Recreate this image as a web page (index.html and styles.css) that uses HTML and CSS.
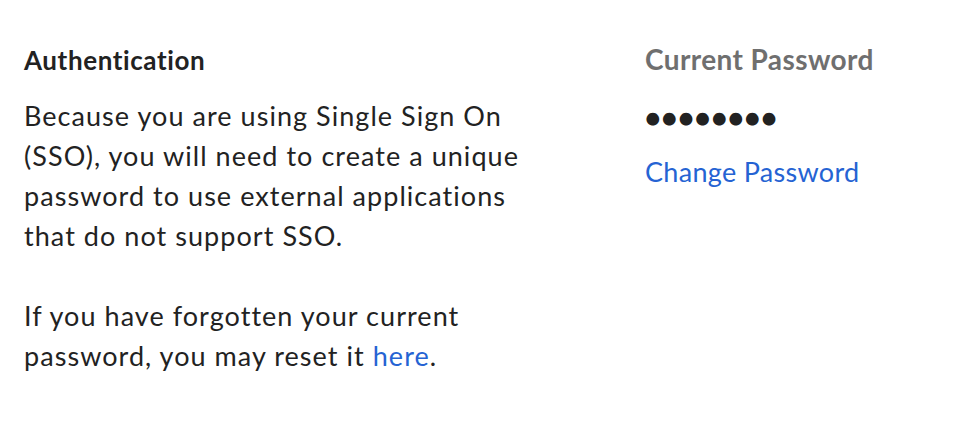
FILE: index.html
```html
<!DOCTYPE html>
<html>
<head>
<meta charset="utf-8">
<link rel="stylesheet" href="styles.css">
</head>
<body>
<div class="page">
  <section class="col-left">
    <h2 class="title">Authentication</h2>
    <p class="text">Because you are using Single Sign On (SSO), you will need to create a unique password to use external applications that do not support SSO.</p>
    <p class="text">If you have forgotten your current password, you may reset it <a class="link" href="#">here</a>.</p>
  </section>
  <section class="col-right">
    <h2 class="label">Current Password</h2>
    <div class="dots">●●●●●●●●</div>
    <a class="link change" href="#">Change Password</a>
  </section>
</div>
</body>
</html>
```

FILE: styles.css
```css
html, body {
  margin: 0;
  padding: 0;
  background: #ffffff;
}
body {
  font-family: Lato, "Open Sans", sans-serif;
  color: #222222;
}
.page {
  display: flex;
  padding: 42px 24px 0 24px;
}
.col-left {
  width: 526px;
}
.col-right {
  margin-left: 95px;
  display: flex;
  flex-direction: column;
  align-items: flex-start;
}
.title {
  margin: 0 0 18px 0;
  font-size: 26px;
  font-weight: 700;
  line-height: 36px;
  letter-spacing: 0.6px;
  color: #222222;
}
.text {
  margin: 0 0 40px 0;
  font-size: 27px;
  line-height: 40px;
  letter-spacing: 1.05px;
}
.label {
  margin: 0;
  font-size: 28px;
  line-height: 34px;
  font-weight: 700;
  letter-spacing: 0.4px;
  color: #6f6f6f;
}
.dots {
  margin-top: 21px;
  font-size: 26px;
  line-height: 40px;
  letter-spacing: 1px;
}
.link {
  color: #2563d3;
  text-decoration: none;
}
.change {
  font-size: 27px;
  line-height: 40px;
  letter-spacing: 0.3px;
  margin-top: 15px;
}
```
